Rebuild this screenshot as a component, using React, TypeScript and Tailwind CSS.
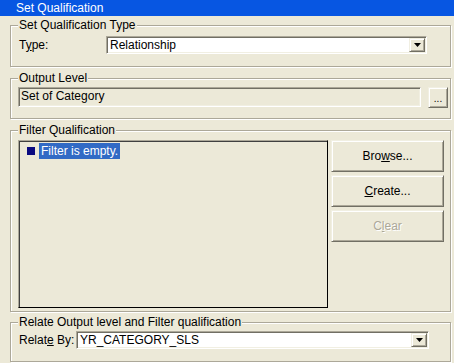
import React from "react";

const sunken =
  "border border-t-[#ACA899] border-l-[#ACA899] border-r-white border-b-white shadow-[inset_1px_1px_0_#716F64,inset_-1px_-1px_0_#F1EFE2]";
const raised =
  "border border-t-[#F1EFE2] border-l-[#F1EFE2] border-r-[#716F64] border-b-[#716F64] shadow-[inset_1px_1px_0_#fff,inset_-1px_-1px_0_#ACA899]";

type GroupProps = {
  label: string;
  className?: string;
  children: React.ReactNode;
};

function Group({ label, className = "", children }: GroupProps) {
  return (
    <fieldset
      className={`ml-[10px] w-[441px] border border-[#ACA899] pl-[7px] shadow-[1px_1px_0_#fff,inset_1px_1px_0_#fff] ${className}`}
    >
      <legend className="bg-[#ECE9D8] px-px leading-[14px]">{label}</legend>
      {children}
    </fieldset>
  );
}

function Arrow() {
  return (
    <svg width="7" height="4" viewBox="0 0 7 4">
      <path d="M0 0h7L3.5 4z" fill="#000" />
    </svg>
  );
}

function Combo({ value, width }: { value: string; width: string }) {
  return (
    <div className={`flex h-[18px] items-stretch bg-white p-px ${sunken} ${width}`}>
      <span className="flex-1 pl-[2px] leading-[14px]">{value}</span>
      <span className={`flex w-[16px] items-center justify-center bg-[#ECE9D8] ${raised}`}>
        <Arrow />
      </span>
    </div>
  );
}

function Button({
  children,
  disabled,
}: {
  children: React.ReactNode;
  disabled?: boolean;
}) {
  return (
    <div
      className={`flex h-[32px] items-center justify-center bg-[#ECE9D8] ${raised} ${
        disabled ? "text-[#ACA899] [text-shadow:1px_1px_0_#fff]" : ""
      }`}
    >
      {children}
    </div>
  );
}

export default function App() {
  return (
    <div className="h-[363px] w-[454px] overflow-hidden bg-[#ECE9D8] font-['Liberation_Sans',Arial,sans-serif] text-[12px] text-black">
      <div className="h-[16px] bg-[#0756E2] pl-[16px] leading-[16px] text-white">
        Set Qualification
      </div>

      <Group label="Set Qualification Type" className="mt-[2px] pb-[12px]">
        <div className="mt-[4px] flex h-[18px] items-center">
          <span className="w-[88px] pl-px">
            T<u>y</u>pe:
          </span>
          <Combo value="Relationship" width="w-[321px]" />
        </div>
      </Group>

      <Group label="Output Level" className="mt-[4px] pb-[10px]">
        <div className="mt-[2px] flex items-start gap-[7px]">
          <div className={`h-[20px] w-[403px] pl-[2px] leading-[16px] ${sunken}`}>
            Set of Category
          </div>
          <div
            className={`flex h-[21px] w-[20px] items-end justify-center pb-[3px] text-[10px] leading-none ${raised}`}
          >
            ...
          </div>
        </div>
      </Group>

      <Group label="Filter Qualification" className="mt-[4px] pb-[3px]">
        <div className="mt-[3px] flex gap-[3px]">
          <div className="h-[168px] w-[310px] border border-t-[#ACA899] border-l-[#ACA899] border-r-black border-b-black pl-[7px] pt-px shadow-[inset_1px_1px_0_#404040]">
            <div className="ml-px mt-px flex h-[16px] items-center gap-[4px]">
              <span className="h-[8px] w-[8px] bg-[#0A0A80]" />
              <span className="bg-[#316AC5] px-[2px] leading-[16px] text-white">
                Filter is empty.
              </span>
            </div>
          </div>
          <div className="flex w-[113px] flex-col gap-[3px]">
            <Button>
              Bro<u>w</u>se...
            </Button>
            <Button>
              <u>C</u>reate...
            </Button>
            <Button disabled>
              C<u>l</u>ear
            </Button>
          </div>
        </div>
      </Group>

      <Group label="Relate Output level and Filter qualification" className="mt-[3px] pb-[12px]">
        <div className="mt-[2px] flex h-[18px] items-center">
          <span className="w-[58px] pl-px">
            Relat<u>e</u> By:
          </span>
          <Combo value="YR_CATEGORY_SLS" width="w-[353px]" />
        </div>
      </Group>
    </div>
  );
}
